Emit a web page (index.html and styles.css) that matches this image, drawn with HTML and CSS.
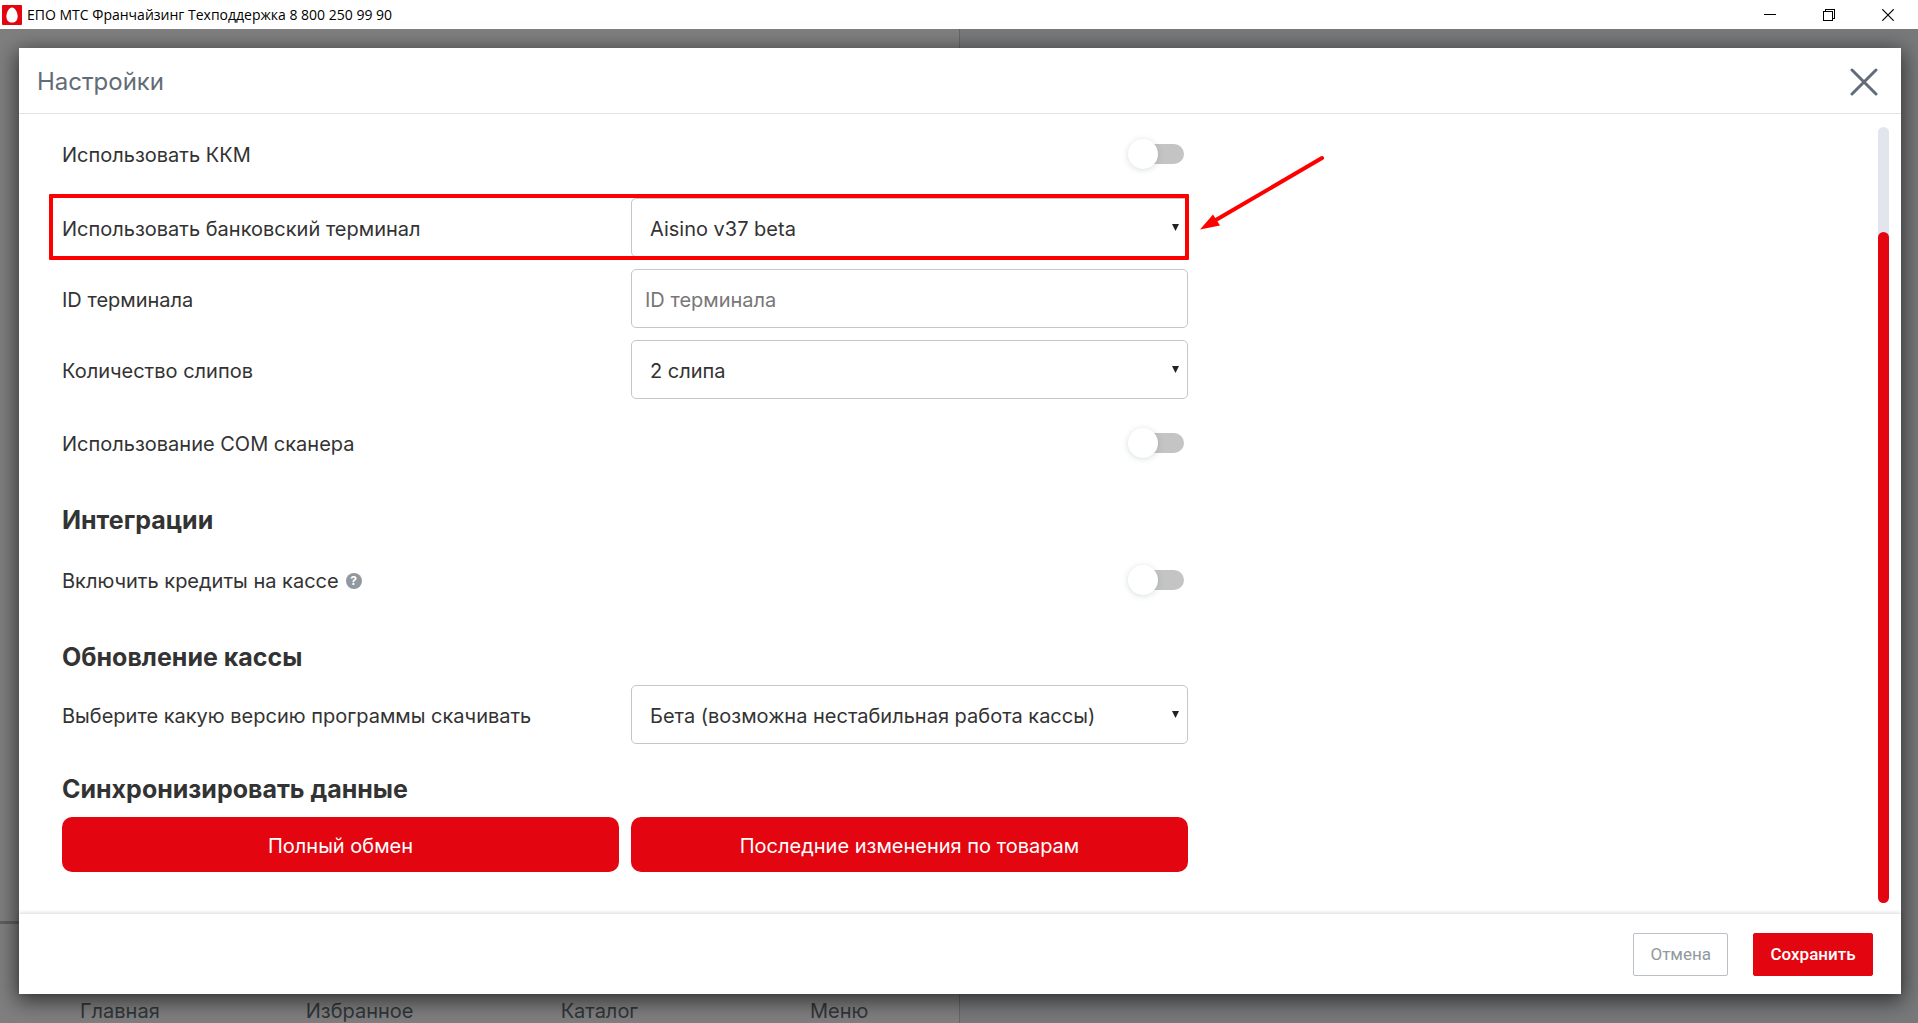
FILE: index.html
```html
<!DOCTYPE html>
<html lang="ru">
<head>
  <meta charset="utf-8">
  <meta name="viewport" content="width=device-width, initial-scale=1">
  <title>ЕПО МТС Франчайзинг</title>
  <link rel="stylesheet" href="styles.css">
</head>
<body>
  <header class="titlebar">
    <svg class="titlebar-logo" viewBox="0 0 20 20" aria-hidden="true">
      <rect width="20" height="20" rx="1" fill="#e30611"/>
      <path d="M10 2.6C13 2.6 15.6 7.4 15.6 11.4C15.6 15.200 13.200 17.600 10 17.600C6.800 17.600 4.400 15.200 4.400 11.400C4.400 7.400 7 2.600 10 2.600Z" fill="#fff"/>
    </svg>
    <span class="titlebar-text">ЕПО МТС Франчайзинг Техподдержка 8 800 250 99 90</span>
    <div class="window-controls">
      <button type="button" class="window-button" aria-label="Свернуть">
        <svg viewBox="0 0 12 12" shape-rendering="crispEdges"><path d="M0 5.500H12" stroke="#000"/></svg>
      </button>
      <button type="button" class="window-button" aria-label="Восстановить">
        <svg viewBox="0 0 12 12" fill="none" stroke="#000" shape-rendering="crispEdges"><path d="M.5 2.500H9.500V11.500H.5ZM2.500 2.500V.5H11.500V9.500H9.500"/></svg>
      </button>
      <button type="button" class="window-button" aria-label="Закрыть окно">
        <svg viewBox="0 0 12 12" stroke="#000" stroke-width="1.200"><path d="M.3.3L11.700 11.700M11.700.3L.3 11.700"/></svg>
      </button>
    </div>
  </header>

  <main class="app">
    <div class="workspace">
      <section class="pane pane-catalog">
        <nav class="bottom-nav">
          <a href="#home">Главная</a>
          <a href="#favorites">Избранное</a>
          <a href="#catalog">Каталог</a>
          <a href="#menu">Меню</a>
        </nav>
      </section>
      <section class="pane pane-receipt"></section>
    </div>

    <div class="overlay">
      <div class="modal" role="dialog" aria-labelledby="modal-title">
        <div class="modal-header">
          <h1 class="modal-title" id="modal-title">Настройки</h1>
          <button type="button" class="modal-close" aria-label="Закрыть">
            <svg viewBox="0 0 28 28" fill="none" stroke="#626c77" stroke-width="3" stroke-linecap="round"><path d="M2 2L26 26M26 2L2 26"/></svg>
          </button>
        </div>

        <div class="modal-body">
          <form class="settings" id="settings">
            <div class="row row-toggle">
              <label for="kkm">Использовать ККМ</label>
              <input class="toggle" type="checkbox" id="kkm">
            </div>
            <div class="row row-marked">
              <label for="terminal">Использовать банковский терминал</label>
              <div class="select">
                <select id="terminal"><option>Aisino v37 beta</option></select>
                <svg class="select-arrow" viewBox="0 0 7 7" aria-hidden="true"><path d="M0 0H7L3.500 7Z"/></svg>
              </div>
              <svg class="pointer" viewBox="0 0 128 76" aria-hidden="true">
                <path d="M123 3L16 65.500" stroke="#f00" stroke-width="4" stroke-linecap="round"/>
                <path d="M1 74.500L14 59.500L21 70.500Z" fill="#f00"/>
              </svg>
            </div>
            <div class="row">
              <label for="terminal-id">ID терминала</label>
              <input class="text-field" type="text" id="terminal-id" placeholder="ID терминала">
            </div>
            <div class="row">
              <label for="slips">Количество слипов</label>
              <div class="select">
                <select id="slips"><option>2 слипа</option></select>
                <svg class="select-arrow" viewBox="0 0 7 7" aria-hidden="true"><path d="M0 0H7L3.500 7Z"/></svg>
              </div>
            </div>
            <div class="row row-toggle">
              <label for="scanner">Использование COM сканера</label>
              <input class="toggle" type="checkbox" id="scanner">
            </div>

            <h2 class="group-title">Интеграции</h2>
            <div class="row row-toggle">
              <label class="with-hint" for="credits">Включить кредиты на кассе
                <span class="hint">?</span>
              </label>
              <input class="toggle" type="checkbox" id="credits">
            </div>

            <h2 class="group-title">Обновление кассы</h2>
            <div class="row">
              <label for="channel">Выберите какую версию программы скачивать</label>
              <div class="select">
                <select id="channel"><option>Бета (возможна нестабильная работа кассы)</option></select>
                <svg class="select-arrow" viewBox="0 0 7 7" aria-hidden="true"><path d="M0 0H7L3.500 7Z"/></svg>
              </div>
            </div>

            <h2 class="group-title">Синхронизировать данные</h2>
            <div class="row">
              <button type="button" class="sync-button">Полный обмен</button>
              <button type="button" class="sync-button">Последние изменения по товарам</button>
            </div>
          </form>
          <div class="scrollbar"><div class="scrollbar-thumb"></div></div>
        </div>

        <div class="modal-footer">
          <button type="button" class="button button-outline">Отмена</button>
          <button type="submit" form="settings" class="button button-primary">Сохранить</button>
        </div>
      </div>
    </div>
  </main>
</body>
</html>
```
FILE: styles.css
```css
* {
  box-sizing: border-box;
}

body {
  margin: 0;
  min-height: 100vh;
  display: flex;
  flex-direction: column;
  font-family: Inter, "Liberation Sans", sans-serif;
  font-size: 20px;
  line-height: 28px;
  color: #333;
}

button,
input,
select {
  font: inherit;
  color: inherit;
}

button {
  cursor: pointer;
}

/* Window title bar */
.titlebar {
  display: flex;
  align-items: center;
  height: 29px;
  padding: 0 1px 0 2px;
  background: #fff;
  color: #000;
}

.titlebar-logo {
  width: 20px;
  height: 20px;
}

.titlebar-text {
  flex: 1;
  padding-left: 5px;
  font-family: "Open Sans", "Noto Sans", sans-serif;
  font-size: 14px;
  line-height: 28px;
}

.window-controls {
  display: flex;
}

.window-button {
  display: flex;
  justify-content: center;
  align-items: center;
  width: 59px;
  height: 28px;
  padding: 0;
  border: 0;
  background: none;
}

.window-button svg {
  width: 12px;
  height: 12px;
}

/* Application behind the dialog */
.app {
  flex: 1;
  display: flex;
  position: relative;
}

.workspace {
  flex: 1;
  display: grid;
  grid-template-columns: 1fr 1fr;
}

.pane {
  display: flex;
  flex-direction: column;
  justify-content: flex-end;
}

.pane-catalog {
  background: #fff;
}

.pane-receipt {
  background: #f1f3f7;
  border-left: 1px solid #c8ccd2;
}

.bottom-nav {
  display: grid;
  grid-template-columns: repeat(4, 1fr);
  align-items: end;
  height: 102px;
  border-top: 3px solid #bbc1c7;
}

.bottom-nav a {
  color: #626c77;
  text-align: center;
  text-decoration: none;
  line-height: 24px;
}

/* Dialog */
.overlay {
  position: absolute;
  inset: 0;
  display: flex;
  padding: 19px 17px 29px 19px;
  background: rgba(0, 0, 0, 0.5);
}

.modal {
  flex: 1;
  display: flex;
  flex-direction: column;
  background: #fff;
  box-shadow: 0 5px 20px 2px rgba(0, 0, 0, 0.6);
}

.modal-header {
  display: flex;
  justify-content: space-between;
  align-items: center;
  height: 66px;
  padding: 2px 23px 0 18px;
  border-bottom: 1px solid #e2e2e2;
}

.modal-title {
  margin: 0;
  font-size: 24px;
  font-weight: 400;
  color: #626c77;
}

.modal-close {
  display: flex;
  padding: 0;
  border: 0;
  background: none;
}

.modal-close svg {
  width: 28px;
  height: 28px;
}

.modal-body {
  flex: 1;
  display: flex;
  justify-content: space-between;
  padding: 8px 12px 11px 43px;
}

.settings {
  flex: 0 1 1126px;
  display: flex;
  flex-direction: column;
  gap: 12px;
}

.row {
  position: relative;
  display: grid;
  grid-template-columns: 1fr 1fr;
  gap: 12px;
  align-items: center;
}

.row label {
  padding-top: 2px;
}

.row-toggle {
  height: 64px;
}

.row-marked::after {
  content: "";
  position: absolute;
  inset: -4px -1px -3px -13px;
  border: 4px solid #f00;
  border-radius: 1px;
  pointer-events: none;
}

.pointer {
  position: absolute;
  left: 100%;
  bottom: 26px;
  width: 128px;
  height: 76px;
  margin-left: 11px;
}

.group-title {
  margin: 18px 0 0;
  font-size: 25px;
  font-weight: 700;
  line-height: 31px;
}

.with-hint {
  display: flex;
  align-items: center;
  gap: 7px;
}

.hint {
  width: 16px;
  height: 16px;
  border-radius: 50%;
  background: #9198a0;
  color: #fff;
  font-size: 12px;
  font-weight: 700;
  line-height: 16px;
  text-align: center;
}

.text-field,
.select select {
  width: 100%;
  height: 59px;
  border: 1px solid #c6c6c6;
  border-radius: 5px;
  background: #fff;
}

.text-field {
  padding: 2px 13px 0;
}

.text-field::placeholder {
  color: #777;
}

.select {
  position: relative;
  display: flex;
}

.select select {
  appearance: none;
  padding: 2px 24px 0 18px;
}

.select-arrow {
  position: absolute;
  top: 26px;
  right: 9px;
  width: 7px;
  height: 7px;
  fill: #222;
  pointer-events: none;
}

.toggle {
  appearance: none;
  justify-self: end;
  display: flex;
  align-items: center;
  width: 51px;
  height: 20px;
  margin: 0 4px 0 0;
  border-radius: 10px;
  background: #c4c4c4;
}

.toggle::before {
  content: "";
  width: 30px;
  height: 30px;
  margin-left: -5px;
  border-radius: 50%;
  background: #fff;
  box-shadow: 0 1px 6px rgba(70, 100, 110, 0.22);
}

.toggle:checked {
  justify-content: flex-end;
  background: #e30611;
}

.sync-button {
  height: 55px;
  padding: 3px 12px 0;
  border: 0;
  border-radius: 10px;
  background: #e30611;
  color: #fff;
}

.scrollbar {
  width: 11px;
  margin-top: 5px;
  padding-top: 105px;
  border-radius: 6px;
  background: #e2e5ed;
}

.scrollbar-thumb {
  height: 100%;
  border-radius: 6px;
  background: #e30611;
}

.modal-footer {
  display: flex;
  justify-content: flex-end;
  gap: 25px;
  padding: 19px 28px 18px;
  box-shadow: 0 -1px 4px rgba(0, 0, 0, 0.16);
}

.button {
  height: 43px;
  padding: 0 16px 2px;
  border: 1px solid #b9bfc5;
  border-radius: 2px;
  font-family: Roboto, "Liberation Sans", sans-serif;
  font-size: 17px;
}

.button-outline {
  background: #fff;
  color: #9198a0;
}

.button-primary {
  min-width: 120px;
  border-color: #e30611;
  background: #e30611;
  color: #fff;
  font-weight: 500;
}
```
